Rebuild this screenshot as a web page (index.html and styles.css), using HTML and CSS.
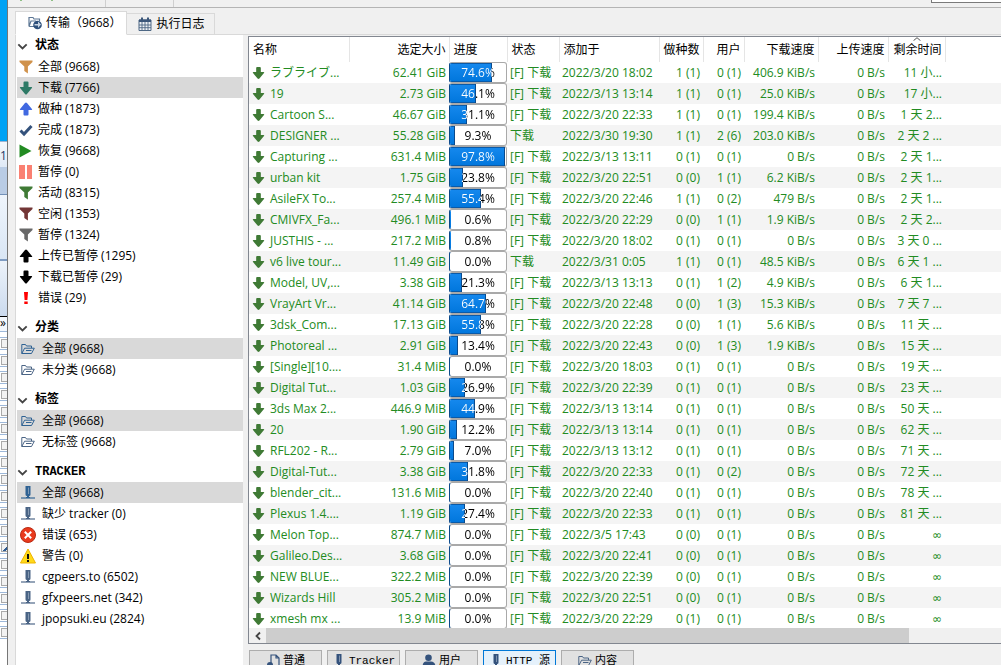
FILE: index.html
```html
<!DOCTYPE html>
<html lang="zh-CN">
<head>
<meta charset="utf-8">
<title>传输</title>
<link rel="stylesheet" href="styles.css">
</head>
<body>
<svg class="defs" aria-hidden="true">
  <symbol id="down" viewBox="0 0 14 14"><path d="M4.500 1.500Q4.500 .5 5.500 .5h3q1 0 1 1V6h3q1.200 0 .4 1L8 13q-1 1-2 0L1.100 7Q.3 6 1.500 6h3z"/></symbol>
  <symbol id="up" viewBox="0 0 14 14"><path d="M4.500 12.500q0 1 1 1h3q1 0 1-1V8h3q1.200 0 .4-1L8 1Q7 0 6 1L1.100 7q-.8 1 .4 1h3z"/></symbol>
  <symbol id="funnel" viewBox="0 0 14 14"><path d="M.5.5h13v1.600L8.900 6.500v7L5.300 11V6.500L.5 2.100z"/></symbol>
  <symbol id="check" viewBox="0 0 14 14"><path d="M1.500 7.500 5 11l7.500-8" fill="none" stroke="currentColor" stroke-width="3"/></symbol>
  <symbol id="play" viewBox="0 0 14 14"><path d="M.5.5 12.500 7 .5 13.500z"/></symbol>
  <symbol id="pause" viewBox="0 0 14 14"><path d="M0 0h6v14H0zM8 0h5v14H8z"/></symbol>
  <symbol id="bang" viewBox="0 0 14 14"><path d="M5 1h4l-.6 8H5.600zM5.300 10.500h3.400V13H5.300z"/></symbol>
  <symbol id="folder" viewBox="0 0 14 14"><path d="M.8 11.500v-9h3.700L5.500 4h5v2M.8 11.500 3.600 6.200H13.300l-2.800 5.300zM5 8.500h5.500" fill="none" stroke="currentColor" stroke-width="1"/></symbol>
  <symbol id="server" viewBox="0 0 14 14"><path d="M4.500 0h5v8.500Q9.500 10 8 10v1h1v1H5v-1h1v-1Q4.500 10 4.500 8.500z"/><path d="M0 12h14" stroke="currentColor" stroke-width="1.800" opacity=".65"/><path d="M7.500 1.500V8" stroke="#9fb0c4" stroke-width=".7"/></symbol>
  <symbol id="user" viewBox="0 0 14 14"><circle cx="6.500" cy="3.800" r="3.300"/><path d="M.5 13.500Q.5 7.500 4 7.500h5q4.500 0 4.500 6z"/></symbol>
  <symbol id="doc" viewBox="0 0 14 14"><path d="M5 9V1h5l3 3v9.500H9M10 1v3h3" fill="none" stroke="currentColor" stroke-width="1.200"/><circle cx="4" cy="11" r="3"/></symbol>
  <symbol id="chev" viewBox="0 0 10 10"><path d="M1.200 3 5 6.800 8.800 3" fill="none" stroke="currentColor" stroke-width="1.700"/></symbol>
</svg>

<div class="desktop">
  <aside class="behind">
    <div class="sky"></div>
    <div class="peek">15</div>
    <div class="band"></div>
    <div class="pane"></div>
    <div class="pane low"></div>
    <div class="more">»</div>
    <div class="ticks">
      <label><input type="checkbox" aria-label="1"></label>
      <label><input type="checkbox" aria-label="2"></label>
      <label><input type="checkbox" aria-label="3"></label>
      <label><input type="checkbox" aria-label="4"></label>
      <label><input type="checkbox" aria-label="5"></label>
      <label><input type="checkbox" aria-label="6"></label>
      <label><input type="checkbox" aria-label="7"></label>
      <label><input type="checkbox" aria-label="8"></label>
      <label><input type="checkbox" aria-label="9"></label>
      <label><input type="checkbox" aria-label="10"></label>
      <label><input type="checkbox" aria-label="11"></label>
      <label><input type="checkbox" aria-label="12"></label>
      <label><input type="checkbox" aria-label="13" checked></label>
      <label><input type="checkbox" aria-label="14"></label>
      <label><input type="checkbox" aria-label="15"></label>
      <label><input type="checkbox" aria-label="16"></label>
      <label><input type="checkbox" aria-label="17"></label>
      <label><input type="checkbox" aria-label="18"></label>
    </div>
  </aside>

  <div class="window">
    <div class="toolbar">
      <i class="speck"></i><i class="speck"></i><i class="rule"></i><i class="rule far"></i>
      <input class="search" type="text" aria-label="搜索">
    </div>

    <div class="tabs" role="tablist">
      <button class="tab on" role="tab">
        <svg viewBox="0 0 14 14"><path d="M1 10.500v-9h4l1 1.500h5.500v2M1 10.500 3 5h5M1 10.500h5" fill="none" stroke="#5d7795" stroke-width="1.200"/><circle cx="9.500" cy="9" r="4.300" fill="#2d4f7a"/><path d="M6.500 9.500h3.500v2.500l3-3.500-3-3V8H6.500z" fill="#c9d5e3"/></svg>
        传输（9668）
      </button>
      <button class="tab" role="tab">
        <svg viewBox="0 0 14 14"><path d="M1 3h12v10.500H1z" fill="#eef2f6" stroke="#4d6784"/><path d="M1 2.500h12V5H1zM3 .5h2V3H3zM9 .5h2V3H9z" fill="#3b577a"/><path d="M1 8h12M1 10.700h12M4 5v8M7 5v8M10 5v8" stroke="#4d6784" stroke-width=".9"/></svg>
        执行日志
      </button>
    </div>

    <div class="work">
      <nav class="side">
        <section>
          <h2><svg class="chev"><use href="#chev"/></svg>状态</h2>
          <button class="item"><svg class="orange"><use href="#funnel"/></svg>全部 (9668)</button>
          <button class="item on"><svg class="teal"><use href="#down"/></svg>下载 (7766)</button>
          <button class="item"><svg class="blue"><use href="#up"/></svg>做种 (1873)</button>
          <button class="item"><svg class="navy"><use href="#check"/></svg>完成 (1873)</button>
          <button class="item"><svg class="lime"><use href="#play"/></svg>恢复 (9668)</button>
          <button class="item"><svg class="salmon"><use href="#pause"/></svg>暂停 (0)</button>
          <button class="item"><svg class="green"><use href="#funnel"/></svg>活动 (8315)</button>
          <button class="item"><svg class="wine"><use href="#funnel"/></svg>空闲 (1353)</button>
          <button class="item"><svg class="gray"><use href="#funnel"/></svg>暂停 (1324)</button>
          <button class="item"><svg><use href="#up"/></svg>上传已暂停 (1295)</button>
          <button class="item"><svg><use href="#down"/></svg>下载已暂停 (29)</button>
          <button class="item"><svg class="red"><use href="#bang"/></svg>错误 (29)</button>
        </section>
        <section class="wide">
          <h2><svg class="chev"><use href="#chev"/></svg>分类</h2>
          <button class="item on"><svg class="steel"><use href="#folder"/></svg>全部 (9668)</button>
          <button class="item"><svg class="slate"><use href="#folder"/></svg>未分类 (9668)</button>
        </section>
        <section class="wide">
          <h2><svg class="chev"><use href="#chev"/></svg>标签</h2>
          <button class="item on"><svg class="steel"><use href="#folder"/></svg>全部 (9668)</button>
          <button class="item"><svg class="slate"><use href="#folder"/></svg>无标签 (9668)</button>
        </section>
        <section class="wide">
          <h2><svg class="chev"><use href="#chev"/></svg>TRACKER</h2>
          <button class="item on"><svg class="steel"><use href="#server"/></svg>全部 (9668)</button>
          <button class="item"><svg class="slate"><use href="#server"/></svg>缺少 tracker (0)</button>
          <button class="item"><svg class="big" viewBox="0 0 16 16"><circle cx="8" cy="8" r="7.500" fill="#e93a1d" stroke="#b92c14"/><path d="m4.800 4.800 6.400 6.400m0-6.400-6.400 6.400" stroke="#fff" stroke-width="2"/></svg>错误 (653)</button>
          <button class="item"><svg class="big" viewBox="0 0 16 16"><path d="M8 1 15.500 15H.5z" fill="#ffd91a" stroke="#efb400"/><path d="M7 6h2v5H7zM7 12h2v2H7z" fill="#111"/></svg>警告 (0)</button>
          <button class="item"><svg class="slate"><use href="#server"/></svg>cgpeers.to (6502)</button>
          <button class="item"><svg class="slate"><use href="#server"/></svg>gfxpeers.net (342)</button>
          <button class="item"><svg class="slate"><use href="#server"/></svg>jpopsuki.eu (2824)</button>
        </section>
      </nav>

      <main class="main">
        <div class="list">
          <div class="rows">
            <table>
              <colgroup><col class="c-name"><col class="c-size"><col class="c-prog"><col class="c-stat"><col class="c-date"><col class="c-seed"><col class="c-peer"><col class="c-down"><col class="c-up"><col class="c-eta"><col></colgroup>
              <thead><tr><th>名称</th><th>选定大小</th><th>进度</th><th>状态</th><th>添加于</th><th>做种数</th><th>用户</th><th>下载速度</th><th>上传速度</th><th class="sorted">剩余时间<svg viewBox="0 0 8 4"><path d="M.5 3.700 4 .7l3.500 3" fill="none" stroke="#555"/></svg></th><th></th></tr></thead>
              <tbody>
                <tr><td><svg><use href="#down"/></svg>ラブライブ...</td><td>62.41 GiB</td><td><div class="bar" style="--p:74.6%"><span>74.6%</span></div></td><td>[F] 下载</td><td>2022/3/20 18:02</td><td>1 (1)</td><td>0 (1)</td><td>406.9 KiB/s</td><td>0 B/s</td><td>11 小...</td><td></td></tr>
                <tr><td><svg><use href="#down"/></svg>19</td><td>2.73 GiB</td><td><div class="bar" style="--p:46.1%"><span>46.1%</span></div></td><td>[F] 下载</td><td>2022/3/13 13:14</td><td>1 (1)</td><td>0 (1)</td><td>25.0 KiB/s</td><td>0 B/s</td><td>17 小...</td><td></td></tr>
                <tr><td><svg><use href="#down"/></svg>Cartoon S...</td><td>46.67 GiB</td><td><div class="bar" style="--p:31.1%"><span>31.1%</span></div></td><td>[F] 下载</td><td>2022/3/20 22:33</td><td>1 (1)</td><td>0 (1)</td><td>199.4 KiB/s</td><td>0 B/s</td><td>1 天 2...</td><td></td></tr>
                <tr><td><svg><use href="#down"/></svg>DESIGNER ...</td><td>55.28 GiB</td><td><div class="bar" style="--p:9.3%"><span>9.3%</span></div></td><td>下载</td><td>2022/3/30 19:30</td><td>1 (1)</td><td>2 (6)</td><td>203.0 KiB/s</td><td>0 B/s</td><td>2 天 2 ...</td><td></td></tr>
                <tr><td><svg><use href="#down"/></svg>Capturing ...</td><td>631.4 MiB</td><td><div class="bar" style="--p:97.8%"><span>97.8%</span></div></td><td>[F] 下载</td><td>2022/3/13 13:11</td><td>0 (1)</td><td>0 (1)</td><td>0 B/s</td><td>0 B/s</td><td>2 天 1...</td><td></td></tr>
                <tr><td><svg><use href="#down"/></svg>urban kit</td><td>1.75 GiB</td><td><div class="bar" style="--p:23.8%"><span>23.8%</span></div></td><td>[F] 下载</td><td>2022/3/20 22:51</td><td>0 (0)</td><td>1 (1)</td><td>6.2 KiB/s</td><td>0 B/s</td><td>2 天 1...</td><td></td></tr>
                <tr><td><svg><use href="#down"/></svg>AsileFX To...</td><td>257.4 MiB</td><td><div class="bar" style="--p:55.4%"><span>55.4%</span></div></td><td>[F] 下载</td><td>2022/3/20 22:46</td><td>1 (1)</td><td>0 (2)</td><td>479 B/s</td><td>0 B/s</td><td>2 天 1...</td><td></td></tr>
                <tr><td><svg><use href="#down"/></svg>CMIVFX_Fa...</td><td>496.1 MiB</td><td><div class="bar" style="--p:0.6%"><span>0.6%</span></div></td><td>[F] 下载</td><td>2022/3/20 22:29</td><td>0 (0)</td><td>1 (1)</td><td>1.9 KiB/s</td><td>0 B/s</td><td>2 天 2...</td><td></td></tr>
                <tr><td><svg><use href="#down"/></svg>JUSTHIS - ...</td><td>217.2 MiB</td><td><div class="bar" style="--p:0.8%"><span>0.8%</span></div></td><td>[F] 下载</td><td>2022/3/20 18:02</td><td>0 (1)</td><td>0 (1)</td><td>0 B/s</td><td>0 B/s</td><td>3 天 0 ...</td><td></td></tr>
                <tr><td><svg><use href="#down"/></svg>v6 live tour...</td><td>11.49 GiB</td><td><div class="bar" style="--p:0%"><span>0.0%</span></div></td><td>下载</td><td>2022/3/31 0:05</td><td>1 (1)</td><td>0 (1)</td><td>48.5 KiB/s</td><td>0 B/s</td><td>6 天 1 ...</td><td></td></tr>
                <tr><td><svg><use href="#down"/></svg>Model, UV,...</td><td>3.38 GiB</td><td><div class="bar" style="--p:21.3%"><span>21.3%</span></div></td><td>[F] 下载</td><td>2022/3/13 13:13</td><td>0 (1)</td><td>1 (2)</td><td>4.9 KiB/s</td><td>0 B/s</td><td>6 天 1...</td><td></td></tr>
                <tr><td><svg><use href="#down"/></svg>VrayArt Vr...</td><td>41.14 GiB</td><td><div class="bar" style="--p:64.7%"><span>64.7%</span></div></td><td>[F] 下载</td><td>2022/3/20 22:48</td><td>0 (0)</td><td>1 (3)</td><td>15.3 KiB/s</td><td>0 B/s</td><td>7 天 7 ...</td><td></td></tr>
                <tr><td><svg><use href="#down"/></svg>3dsk_Com...</td><td>17.13 GiB</td><td><div class="bar" style="--p:55.8%"><span>55.8%</span></div></td><td>[F] 下载</td><td>2022/3/20 22:28</td><td>0 (0)</td><td>1 (1)</td><td>5.6 KiB/s</td><td>0 B/s</td><td>11 天 ...</td><td></td></tr>
                <tr><td><svg><use href="#down"/></svg>Photoreal ...</td><td>2.91 GiB</td><td><div class="bar" style="--p:13.4%"><span>13.4%</span></div></td><td>[F] 下载</td><td>2022/3/20 22:43</td><td>0 (0)</td><td>1 (3)</td><td>1.9 KiB/s</td><td>0 B/s</td><td>15 天 ...</td><td></td></tr>
                <tr><td><svg><use href="#down"/></svg>[Single][10....</td><td>31.4 MiB</td><td><div class="bar" style="--p:0%"><span>0.0%</span></div></td><td>[F] 下载</td><td>2022/3/20 18:03</td><td>0 (1)</td><td>0 (1)</td><td>0 B/s</td><td>0 B/s</td><td>19 天 ...</td><td></td></tr>
                <tr><td><svg><use href="#down"/></svg>Digital Tut...</td><td>1.03 GiB</td><td><div class="bar" style="--p:26.9%"><span>26.9%</span></div></td><td>[F] 下载</td><td>2022/3/20 22:39</td><td>0 (1)</td><td>0 (1)</td><td>0 B/s</td><td>0 B/s</td><td>23 天 ...</td><td></td></tr>
                <tr><td><svg><use href="#down"/></svg>3ds Max 2...</td><td>446.9 MiB</td><td><div class="bar" style="--p:44.9%"><span>44.9%</span></div></td><td>[F] 下载</td><td>2022/3/13 13:14</td><td>0 (1)</td><td>0 (1)</td><td>0 B/s</td><td>0 B/s</td><td>50 天 ...</td><td></td></tr>
                <tr><td><svg><use href="#down"/></svg>20</td><td>1.90 GiB</td><td><div class="bar" style="--p:12.2%"><span>12.2%</span></div></td><td>[F] 下载</td><td>2022/3/13 13:14</td><td>0 (1)</td><td>0 (1)</td><td>0 B/s</td><td>0 B/s</td><td>62 天 ...</td><td></td></tr>
                <tr><td><svg><use href="#down"/></svg>RFL202 - R...</td><td>2.79 GiB</td><td><div class="bar" style="--p:7%"><span>7.0%</span></div></td><td>[F] 下载</td><td>2022/3/13 13:12</td><td>0 (1)</td><td>0 (1)</td><td>0 B/s</td><td>0 B/s</td><td>71 天 ...</td><td></td></tr>
                <tr><td><svg><use href="#down"/></svg>Digital-Tut...</td><td>3.38 GiB</td><td><div class="bar" style="--p:31.8%"><span>31.8%</span></div></td><td>[F] 下载</td><td>2022/3/20 22:33</td><td>0 (1)</td><td>0 (2)</td><td>0 B/s</td><td>0 B/s</td><td>72 天 ...</td><td></td></tr>
                <tr><td><svg><use href="#down"/></svg>blender_cit...</td><td>131.6 MiB</td><td><div class="bar" style="--p:0%"><span>0.0%</span></div></td><td>[F] 下载</td><td>2022/3/20 22:40</td><td>0 (1)</td><td>0 (1)</td><td>0 B/s</td><td>0 B/s</td><td>78 天 ...</td><td></td></tr>
                <tr><td><svg><use href="#down"/></svg>Plexus 1.4....</td><td>1.19 GiB</td><td><div class="bar" style="--p:27.4%"><span>27.4%</span></div></td><td>[F] 下载</td><td>2022/3/20 22:33</td><td>0 (1)</td><td>0 (1)</td><td>0 B/s</td><td>0 B/s</td><td>81 天 ...</td><td></td></tr>
                <tr><td><svg><use href="#down"/></svg>Melon Top...</td><td>874.7 MiB</td><td><div class="bar" style="--p:0%"><span>0.0%</span></div></td><td>[F] 下载</td><td>2022/3/5 17:43</td><td>0 (0)</td><td>0 (1)</td><td>0 B/s</td><td>0 B/s</td><td class="inf">∞</td><td></td></tr>
                <tr><td><svg><use href="#down"/></svg>Galileo.Des...</td><td>3.68 GiB</td><td><div class="bar" style="--p:0%"><span>0.0%</span></div></td><td>[F] 下载</td><td>2022/3/20 22:41</td><td>0 (0)</td><td>0 (1)</td><td>0 B/s</td><td>0 B/s</td><td class="inf">∞</td><td></td></tr>
                <tr><td><svg><use href="#down"/></svg>NEW BLUE...</td><td>322.2 MiB</td><td><div class="bar" style="--p:0%"><span>0.0%</span></div></td><td>[F] 下载</td><td>2022/3/20 22:39</td><td>0 (0)</td><td>0 (1)</td><td>0 B/s</td><td>0 B/s</td><td class="inf">∞</td><td></td></tr>
                <tr><td><svg><use href="#down"/></svg>Wizards Hill</td><td>305.2 MiB</td><td><div class="bar" style="--p:0%"><span>0.0%</span></div></td><td>[F] 下载</td><td>2022/3/20 22:51</td><td>0 (0)</td><td>0 (1)</td><td>0 B/s</td><td>0 B/s</td><td class="inf">∞</td><td></td></tr>
                <tr><td><svg><use href="#down"/></svg>xmesh mx ...</td><td>13.9 MiB</td><td><div class="bar" style="--p:0%"><span>0.0%</span></div></td><td>[F] 下载</td><td>2022/3/20 22:29</td><td>0 (1)</td><td>0 (1)</td><td>0 B/s</td><td>0 B/s</td><td class="inf">∞</td><td></td></tr>
              </tbody>
            </table>
          </div>
          <div class="scroll">
            <button aria-label="向左滚动"><svg viewBox="0 0 10 10"><path d="M7 1.500 3.500 5 7 8.500" fill="none" stroke="#444" stroke-width="1.800"/></svg></button>
            <div class="thumb"></div>
          </div>
        </div>
        <div class="details">
          <button><svg class="navy"><use href="#doc"/></svg>普通</button>
          <button><svg class="navy"><use href="#server"/></svg>Tracker</button>
          <button><svg class="navy"><use href="#user"/></svg>用户</button>
          <button class="on"><svg class="navy"><use href="#server"/></svg>HTTP 源</button>
          <button><svg class="slate"><use href="#folder"/></svg>内容</button>
        </div>
      </main>
    </div>
  </div>
</div>
</body>
</html>
```

FILE: styles.css
```css
* { box-sizing: border-box; }
body {
  margin: 0;
  height: 100vh;
  overflow: hidden;
  background: #f0f0f0;
  color: #000;
  font: 12px/20px "Open Sans", "Noto Sans CJK SC", sans-serif;
}
button, input { font: inherit; color: inherit; margin: 0; padding: 0; border: 0; background: none; border-radius: 0; }
svg { flex: none; width: 14px; height: 14px; fill: currentColor; }
.defs { position: absolute; width: 0; height: 0; }
.desktop { display: flex; height: 100%; }

/* Strip of the windows behind */
.behind { width: 7px; flex: none; overflow: hidden; background: #fff; }
.sky { height: 141px; background: #00a2f4; }
.peek { height: 26px; line-height: 28px; background: linear-gradient(#f4f8fc, #dfe9f6); color: #1f3a66; border-top: 1px solid #9cb4d2; }
.band { height: 28px; background: #b9cce5; border-bottom: 1px solid #7391b8; }
.pane { height: 66px; background: linear-gradient(#eff5fc, #d9e6f5); border-bottom: 2px solid #7f9cc2; }
.pane.low { height: 56px; background: linear-gradient(#edf3fa, #cbdaee); border-bottom: 1px solid #000; }
.more { height: 15px; line-height: 12px; border-bottom: 1px solid #9db8da; background: #f4f8fd; }
.ticks { display: grid; gap: 4px; padding-top: 5px; }
.ticks label { display: flex; align-items: center; height: 13px; padding-left: 1px; border: solid #9db8da; border-width: 1px 0; }
.ticks input { appearance: none; flex: none; width: 10px; height: 9px; border: 1px solid #aaa; background: #f2f2f2; }
.ticks input:checked { background: linear-gradient(135deg, #f2f2f2 50%, #2f5c93 50%, #2f5c93 70%, #f2f2f2 70%); }

.window { flex: 1; min-width: 0; display: flex; flex-direction: column; border-left: 1px solid #767676; }
.toolbar { display: flex; height: 8px; overflow: hidden; border-bottom: 1px solid #b4b4b4; padding-left: 12px; }
.speck { width: 2px; height: 1px; background: #8fbf86; margin-right: 29px; }
.rule { width: 1px; background: #cfcfcf; margin-left: 23px; }
.rule.far { margin-left: 67px; }
.search { width: 70px; height: 3px; margin-left: auto; background: #fff; border: solid #7a7a7a; border-width: 0 0 1px 1px; }

.tabs { display: flex; align-items: flex-end; height: 27px; padding: 3px 0 0 7px; }
.tabs::after { content: ""; flex: 1; border-bottom: 1px solid #d9d9d9; }
.tab { display: flex; align-items: center; gap: 4px; height: 22px; padding: 0 10px 0 11px; border: 1px solid #d9d9d9; border-left: 0; }
.tab.on { height: 24px; padding: 0 5px 0 12px; background: #fff; border-left: 1px solid #d9d9d9; border-bottom-color: #fff; }

.work { flex: 1; min-height: 0; display: flex; }
.side { flex: none; width: 228px; margin: 0 5px 0 7px; padding-left: 1px; background: #fff; border-left: 1px solid #d9d9d9; overflow: hidden; }
.side section { margin-bottom: 9px; }
.side h2 { display: flex; align-items: center; gap: 7px; height: 21px; margin: 0; padding-top: 2px; font: bold 12px/19px "Liberation Mono", "Noto Sans CJK SC", monospace; }
.side .chev { width: 11px; height: 11px; color: #444; }
.item { display: flex; align-items: center; gap: 5px; width: 100%; height: 21px; padding-left: 2px; white-space: nowrap; }
.wide .item { gap: 7px; padding-left: 4px; }
.wide .item svg.big { width: 16px; height: 16px; margin: 0 -1px; }
.item.on { background: #d9d9d9; }
.orange { color: #d0924b; } .teal { color: #2e7a66; } .blue { color: #4169e1; }
.navy { color: #34527c; } .lime { color: #228b22; } .salmon { color: #fa8072; }
.green { color: #3f7a35; } .wine { color: #733636; } .gray { color: #696969; }
.red { color: #f00; } .steel { color: #2f6293; } .slate { color: #4a6485; }

.main { flex: 1; min-width: 0; display: flex; flex-direction: column; padding-top: 1px; }
.list { flex: 1; min-height: 0; display: flex; flex-direction: column; background: #fff; border: 1px solid #828790; border-right: 0; }
.rows { flex: 1; min-height: 0; overflow: hidden; }
table { width: 100%; table-layout: fixed; border-collapse: collapse; white-space: nowrap; }
.c-name { width: 100px; } .c-size { width: 100px; } .c-prog { width: 58px; }
.c-stat { width: 52px; } .c-date { width: 100px; } .c-seed { width: 44px; }
.c-peer { width: 41px; } .c-down { width: 74px; } .c-up { width: 70px; } .c-eta { width: 57px; }
th { height: 25px; padding: 0 3px 0 4px; font-weight: normal; text-align: left; border-right: 1px solid #e5e5e5; }
th:last-child { border: 0; }
.sorted { position: relative; }
.sorted svg { position: absolute; top: 0; left: 24px; width: 8px; height: 4px; }
td { height: 21px; padding: 0 3px; color: #228b22; line-height: 20px; }
td:first-child svg { float: left; width: 13px; height: 14px; margin: 3px 5px 0 0; color: #3f7a35; }
tbody tr:nth-child(even) { background: #f4f4f4; }
th:nth-child(2), th:nth-child(n+6), td:nth-child(2), td:nth-child(n+6) { text-align: right; }
td:nth-child(3) { padding: 0; }
.inf { font-family: "DejaVu Sans", sans-serif; }
.bar {
  position: relative;
  height: 21px;
  border: 1px solid #a9a9a9;
  border-left-color: #0a4a8c;
  border-radius: 3px;
  background: #fff;
  text-align: center;
  overflow: hidden;
}
.bar::before { content: ""; position: absolute; inset: 0 auto 0 0; width: var(--p); background: linear-gradient(#1689ee, #0076dc); box-shadow: inset -1px 0 #0a4a8c, inset 0 1px #0a5aa8, inset 0 -1px #0a5aa8; }
.bar span {
  position: relative;
  display: block;
  line-height: 19px;
  color: transparent;
  background: linear-gradient(90deg, #fff var(--p), #000 var(--p));
  background-clip: text;
  -webkit-background-clip: text;
}

.scroll { display: flex; height: 15px; background: #f0f0f0; }
.scroll button { display: flex; align-items: center; justify-content: center; width: 17px; }
.scroll button svg { width: 10px; height: 10px; }
.thumb { flex: 7; background: #cdcdcd; }
.scroll::after { content: ""; flex: 1; }

.details { display: flex; gap: 5px; height: 21px; padding: 6px 0 0 1px; overflow: hidden; }
.details button { display: flex; flex: none; align-items: center; justify-content: center; gap: 3px; width: 73px; height: 22px; border: 1px solid #adadad; background: #e1e1e1; font: 11px/20px "Liberation Mono", "Noto Sans CJK SC", monospace; }
.details button.on { border-color: #0078d7; background: #e5f1fb; }
```
